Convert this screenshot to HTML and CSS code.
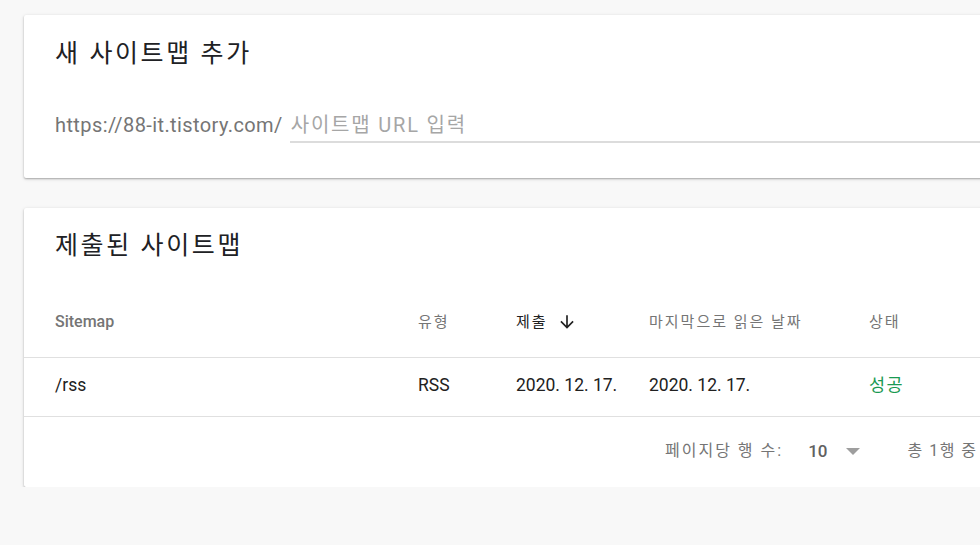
FILE: index.html
```html
<!DOCTYPE html>
<html lang="ko">
<head>
<meta charset="utf-8">
<title>Sitemaps</title>
<link rel="stylesheet" href="styles.css">
</head>
<body>
<main class="page">
  <section class="card add-card">
    <h2 class="card-title">새 사이트맵 추가</h2>
    <div class="url-row">
      <span class="url-prefix">https://88-it.tistory.com/</span>
      <div class="url-field">
        <input class="url-input" type="text" placeholder="사이트맵 URL 입력">
      </div>
    </div>
  </section>

  <section class="card list-card">
    <h2 class="card-title">제출된 사이트맵</h2>
    <div class="table">
      <div class="row head">
        <div class="cell">Sitemap</div>
        <div class="cell ko">유형</div>
        <div class="cell ko sorted">제출
          <svg class="sort-icon" viewBox="0 0 24 24" width="20" height="20"><path d="M20 12l-1.41-1.41L13 16.17V4h-2v12.17l-5.58-5.59L4 12l8 8 8-8z" fill="#212121"/></svg>
        </div>
        <div class="cell ko">마지막으로 읽은 날짜</div>
        <div class="cell ko">상태</div>
      </div>
      <div class="row body">
        <div class="cell">/rss</div>
        <div class="cell">RSS</div>
        <div class="cell">2020. 12. 17.</div>
        <div class="cell">2020. 12. 17.</div>
        <div class="cell ko status-ok">성공</div>
      </div>
    </div>
    <div class="pager">
      <span class="pager-label ko">페이지당 행 수:</span>
      <span class="pager-select">
        <span class="pager-value">10</span>
        <svg class="drop-icon" viewBox="0 0 14 7" width="14" height="7"><path d="M0 0h14L7 7z" fill="#9e9e9e"/></svg>
      </span>
      <span class="pager-range ko">총 1행 중</span>
    </div>
  </section>
</main>
</body>
</html>
```

FILE: styles.css
```css
* { box-sizing: border-box; }

html, body {
  margin: 0;
  padding: 0;
  background: #f8f8f8;
  overflow: hidden;
  font-family: Roboto, "Noto Sans CJK KR", sans-serif;
  color: #212121;
}

.page {
  padding: 15px 0 0 24px;
  width: 1200px;
}

.card {
  background: #fff;
  border-radius: 2px;
  box-shadow: 0 1px 2px rgba(0, 0, 0, 0.28), 0 1px 4px rgba(0, 0, 0, 0.1);
}

.card-title {
  margin: 0;
  font-size: 25px;
  line-height: 32px;
  font-weight: 400;
  color: #202124;
  letter-spacing: 2.6px;
}

.add-card {
  padding: 23px 31px 35px 31px;
  margin-bottom: 30px;
}

.url-row {
  display: flex;
  align-items: flex-end;
  margin-top: 39px;
}

.url-prefix {
  font-size: 20px;
  line-height: 30px;
  letter-spacing: 0.4px;
  color: #757575;
  padding-bottom: 3px;
  margin-right: 7px;
}

.url-field {
  flex: 1;
  border-bottom: 2px solid #dcdcdc;
}

.url-input {
  display: block;
  width: 100%;
  border: 0;
  outline: 0;
  padding: 0 0 0 1px;
  font-family: Roboto, "Noto Sans CJK KR", sans-serif;
  font-size: 20px;
  letter-spacing: 1.8px;
  line-height: 32px;
  height: 32px;
  background: transparent;
  color: #212121;
}

.url-input::placeholder {
  color: #a6a6a6;
}

.list-card {
  padding-top: 22px;
}

.list-card .card-title {
  padding-left: 31px;
}

.table {
  margin-top: 50px;
}

.row {
  display: grid;
  grid-template-columns: 363px 98px 133px 220px 1fr;
  padding-left: 31px;
  border-bottom: 1px solid #e0e0e0;
}

.row.head {
  padding-bottom: 25px;
  font-size: 15px;
  line-height: 20px;
  color: #757575;
  font-weight: 400;
}

.row.head .cell:first-child {
  font-size: 16px;
  font-weight: 500;
}

.ko {
  letter-spacing: 2px;
}

.cell.sorted {
  color: #212121;
  display: flex;
  align-items: center;
  gap: 9px;
}

.row.body {
  padding-top: 17px;
  padding-bottom: 21px;
  font-size: 17.5px;
  line-height: 20px;
}

.row.body .ko {
  letter-spacing: 1.5px;
}

.status-ok {
  color: #1a9a52;
}

.pager {
  display: flex;
  align-items: center;
  padding: 24px 0 26px 641px;
  font-size: 16px;
  line-height: 20px;
  color: #757575;
}

.pager-select {
  display: flex;
  align-items: center;
  margin-left: 25px;
}

.pager-value {
  font-size: 17px;
  font-weight: 500;
  color: #616161;
}

.drop-icon {
  margin-left: 19px;
}

.pager-range {
  margin-left: 47px;
  letter-spacing: 1.5px;
}
```
